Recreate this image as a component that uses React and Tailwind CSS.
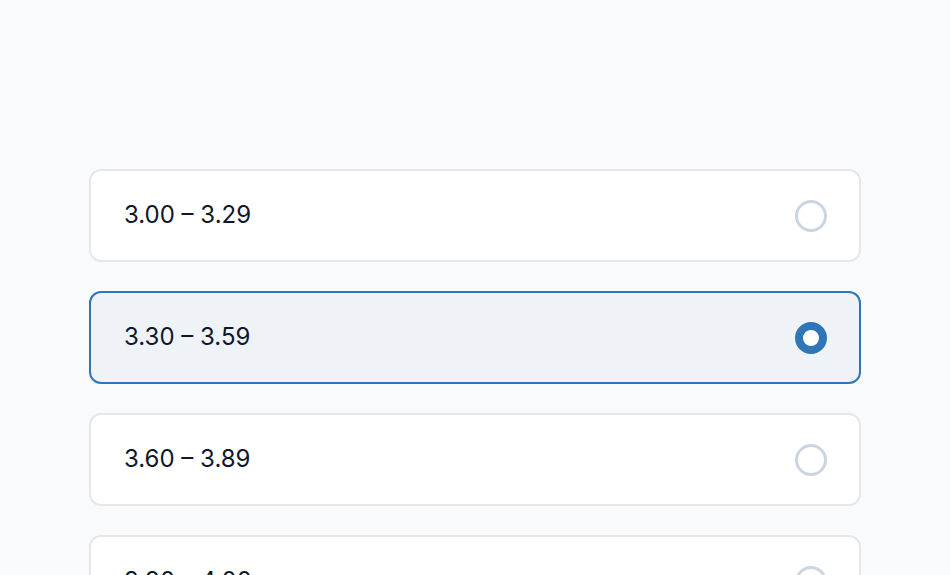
import { useState } from 'react';

const ranges = ['3.00 – 3.29', '3.30 – 3.59', '3.60 – 3.89', '3.90 – 4.00'];

export default function App() {
  const [selected, setSelected] = useState(1);

  return (
    <div className="h-screen overflow-hidden bg-[#f8fafc] px-[89px] pt-[169px] font-['Inter',sans-serif]">
      <div className="flex flex-col gap-[29px]">
        {ranges.map((r, i) => {
          const active = i === selected;
          return (
            <button
              key={r}
              onClick={() => setSelected(i)}
              className={`flex h-[93px] w-[772px] shrink-0 items-center justify-between rounded-[12px] border-2 pl-[33px] pr-[32px] text-left ${
                active ? 'border-[#2f76b6] bg-[#eff3f8]' : 'border-[#e5e7eb] bg-white'
              }`}
            >
              <span className="text-[24px] leading-none text-[#0f172a] -mt-[2px]">{r}</span>
              <span
                className={`h-[32px] w-[32px] rounded-full bg-white ${
                  active ? 'border-[8px] border-[#2f76b6]' : 'border-[3px] border-[#cbd5e1]'
                }`}
              />
            </button>
          );
        })}
      </div>
    </div>
  );
}
